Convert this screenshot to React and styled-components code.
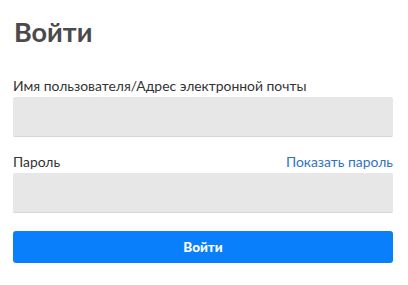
import React from "react";
import styled, { createGlobalStyle } from "styled-components";

const Global = createGlobalStyle`
  html, body { margin: 0; padding: 0; background: #fff; }
  body { font-family: "Lato", "Open Sans", "Liberation Sans", sans-serif; }
  * { box-sizing: border-box; }
`;

const Form = styled.form`
  width: 380px;
  margin-left: 13px;
  padding-top: 14px;
  display: flex;
  flex-direction: column;
`;

const Title = styled.h1`
  margin: 0 0 27px 1px;
  font-size: 27px;
  line-height: 36px;
  font-weight: 700;
  color: #4a4a4a;
`;

const Field = styled.div`
  display: flex;
  flex-direction: column;
  margin-bottom: ${(p) => p.$gap}px;
`;

const LabelRow = styled.div`
  display: flex;
  justify-content: space-between;
  align-items: flex-end;
  height: 18px;
  margin-bottom: 2px;
`;

const Label = styled.label`
  font-size: 13.9px;
  line-height: 18px;
  color: #333;
`;

const ShowLink = styled.a`
  font-size: 13.9px;
  line-height: 18px;
  color: #2f73c4;
  text-decoration: none;
  cursor: pointer;
`;

const Input = styled.input`
  height: 40px;
  width: 100%;
  border: none;
  border-bottom: 1px solid #d6d6d6;
  border-radius: 2px;
  background: #e7e7e7;
  outline: none;
  padding: 0 10px;
  font: inherit;
`;

const Button = styled.button`
  height: 32px;
  width: 100%;
  border: none;
  border-radius: 3px;
  background: #0a7ffb;
  color: #fff;
  font-family: inherit;
  font-size: 13.5px;
  font-weight: 900;
  cursor: pointer;
`;

export default function App() {
  return (
    <>
      <Global />
      <Form onSubmit={(e) => e.preventDefault()}>
        <Title>Войти</Title>
        <Field $gap={16}>
          <LabelRow>
            <Label>Имя пользователя/Адрес электронной почты</Label>
          </LabelRow>
          <Input type="text" />
        </Field>
        <Field $gap={18}>
          <LabelRow>
            <Label>Пароль</Label>
            <ShowLink>Показать пароль</ShowLink>
          </LabelRow>
          <Input type="password" />
        </Field>
        <Button type="submit">Войти</Button>
      </Form>
    </>
  );
}
